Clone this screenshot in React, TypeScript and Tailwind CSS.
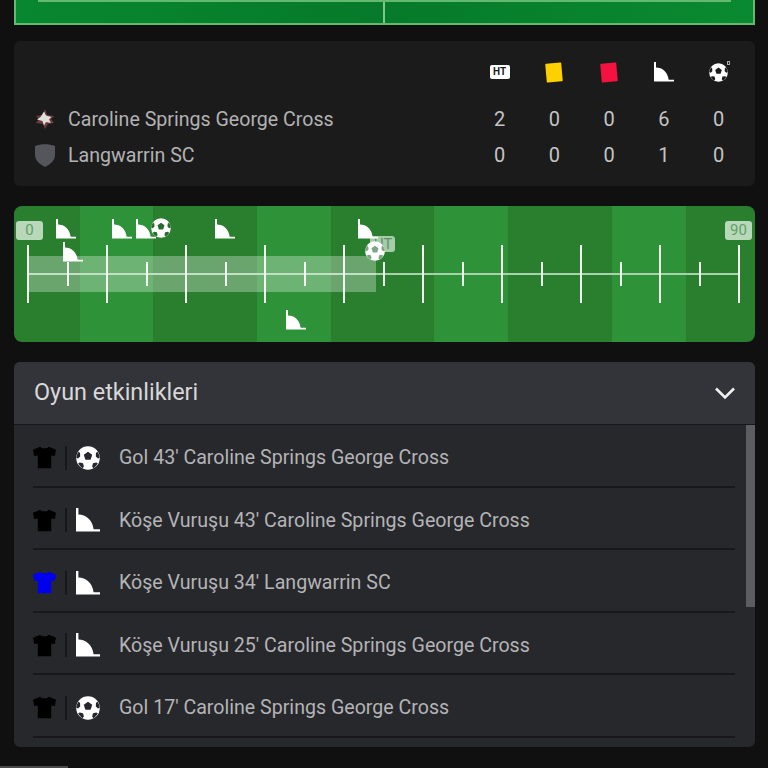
import React from 'react'

const font = { fontFamily: 'Roboto, sans-serif' }

const bands = [
  { w: 'w-[66px]', c: 'bg-[#2a7f2f]' },
  { w: 'w-[73px]', c: 'bg-[#2e9338]' },
  { w: 'w-[104px]', c: 'bg-[#2a7f2f]' },
  { w: 'w-[74px]', c: 'bg-[#2e9338]' },
  { w: 'w-[103px]', c: 'bg-[#2a7f2f]' },
  { w: 'w-[74px]', c: 'bg-[#2e9338]' },
  { w: 'w-[104px]', c: 'bg-[#2a7f2f]' },
  { w: 'w-[74px]', c: 'bg-[#2e9338]' },
  { w: 'flex-1', c: 'bg-[#2a7f2f]' },
]

const ticks = Array.from({ length: 19 }, (_, i) => i)

const events = [
  { shirt: '#000000', icon: 'ball', text: "Gol 43' Caroline Springs George Cross" },
  { shirt: '#000000', icon: 'corner', text: "Köşe Vuruşu 43' Caroline Springs George Cross" },
  { shirt: '#0000f0', icon: 'corner', text: "Köşe Vuruşu 34' Langwarrin SC" },
  { shirt: '#000000', icon: 'corner', text: "Köşe Vuruşu 25' Caroline Springs George Cross" },
  { shirt: '#000000', icon: 'ball', text: "Gol 17' Caroline Springs George Cross" },
]

function Corner({ className }: { className?: string }) {
  return (
    <svg viewBox="0 0 24 24" className={className} fill="#fff">
      <path d="M0 0h2.400v6.500C10 6.500 16.500 12 17.600 21.200H24V23.500H0Z" />
    </svg>
  )
}

function Ball({ className, patch = '#26272c' }: { className?: string; patch?: string }) {
  return (
    <svg viewBox="0 0 24 24" className={className}>
      <circle cx="12" cy="12" r="11.800" fill="#fff" />
      <path d="M12 5.800l4.200 3-1.600 4.900H9.400L7.800 8.800Z" fill={patch} />
      <path d="M21.400 5.500c1.300 1.900 2.100 4 2.300 6.300l-1.700.6-2.200-2 .2-3.400Z" fill={patch} />
      <path d="M2.600 5.500C1.300 7.400.5 9.500.3 11.800l1.700.6 2.200-2-.2-3.400Z" fill={patch} />
      <path d="M21.800 17.600c-1 1.900-2.500 3.500-4.400 4.600l-1.300-1.700.9-3.300 3.300-.6Z" fill={patch} />
      <path d="M2.200 17.600c1 1.900 2.500 3.500 4.400 4.600l1.300-1.700-.9-3.300-3.300-.6Z" fill={patch} />
    </svg>
  )
}

function Shirt({ color }: { color: string }) {
  return (
    <svg viewBox="0 0 24 24" className="w-[23px] h-[23px]" fill={color}>
      <path d="M7.500.8C9 3 15 3 16.500.8L24 3.800 22.800 10.500 19 9.800V23.200H5V9.800L1.200 10.500 0 3.800Z" />
    </svg>
  )
}

function TeamLogo() {
  return (
    <svg viewBox="0 0 22 22" className="w-[22px] h-[22px]">
      <path d="M11 1l2 6 7 1-3 3 3 4-6 1-3 5-2-5-7-1 3-4-3-3 7-1Z" fill="#6e3a3c" />
      <path d="M10 3.500l2 4 5.500 1.500-2.500 2.500 2 3.500-5-1-2 3.500-1.500-4.500-5.500-1.500 3.500-2.500Z" fill="#dededa" />
    </svg>
  )
}

function Shield() {
  return (
    <svg viewBox="0 0 20 24" className="w-[20px] h-[24px]" fill="#55565b">
      <path d="M0 3C6 .5 14 .5 20 3V12C20 17 16 21 10 24 4 21 0 17 0 12Z" />
    </svg>
  )
}

function Stat({ v }: { v: number }) {
  return <div className="w-[54.75px] text-center text-[20px] text-[#c4c4c4]">{v}</div>
}

export default function App() {
  return (
    <div style={font} className="h-[768px] overflow-hidden bg-[#101010] px-[14px]">
      {/* pitch */}
      <div className="w-[741px] h-[25px] flex flex-col bg-[linear-gradient(90deg,#08872f,#067a2a_50%,#0a8a30)] border-x-2 border-b-2 border-[#62b96f]">
        <div className="mx-[22px] h-[2px] bg-[#62b96f]" />
        <div className="flex flex-1">
          <div className="w-[369px] border-r-2 border-[#7cc788]" />
        </div>
      </div>

      {/* stats */}
      <div className="w-[741px] h-[145px] mt-[16px] rounded-[6px] bg-[#1b1b1c] pl-[20px] pr-[9px]">
        <div className="flex h-[60px] pt-[20px] justify-end items-start">
          <div className="w-[54.75px] h-[22px] flex items-center justify-center">
            <span className="w-[20px] h-[14px] rounded-[2px] bg-white text-[#1b1b1d] text-[10px] leading-[14px] font-bold text-center">HT</span>
          </div>
          <div className="w-[54.75px] h-[22px] flex items-center justify-center">
            <div className="w-[16px] h-[19px] rounded-[1px] bg-[#ffd000] -rotate-5" />
          </div>
          <div className="w-[54.75px] h-[22px] flex items-center justify-center">
            <div className="w-[16px] h-[19px] rounded-[1px] bg-[#f5123f] -rotate-5" />
          </div>
          <div className="w-[54.75px] h-[22px] flex items-center justify-center">
            <Corner className="w-[20px] h-[20px]" />
          </div>
          <div className="w-[54.75px] h-[22px] flex items-center justify-center relative">
            <Ball className="w-[19px] h-[19px]" patch="#1b1b1c" />
            <span className="absolute left-[36px] top-[0px] w-[3px] h-[4px] border border-[#aaaaaa]" />
          </div>
        </div>
        <div className="flex items-center h-[36px]">
          <div className="w-[22px] flex justify-center"><TeamLogo /></div>
          <div className="ml-[12px] pt-[1px] flex-1 text-[19.600px] text-[#b2b2b2]">Caroline Springs George Cross</div>
          {[2, 0, 0, 6, 0].map((v, i) => <Stat key={i} v={v} />)}
        </div>
        <div className="flex items-center h-[36px]">
          <div className="w-[22px] flex justify-center"><Shield /></div>
          <div className="ml-[12px] pt-[1px] flex-1 text-[19.600px] text-[#b2b2b2]">Langwarrin SC</div>
          {[0, 0, 0, 1, 0].map((v, i) => <Stat key={i} v={v} />)}
        </div>
      </div>

      {/* timeline */}
      <div className="relative w-[741px] h-[136px] mt-[20px] rounded-[8px] overflow-hidden flex">
        {bands.map((b, i) => <div key={i} className={`${b.w} ${b.c}`} />)}

        <div className="absolute left-[13px] top-[39px] w-[713px] h-[58px] flex justify-between items-center">
          <div className="absolute left-0 right-0 top-[28px] h-[2px] bg-[#a9d2ab]" />
          {ticks.map(i => (
            <div key={i} className={i % 2 === 0 ? 'relative w-[2px] h-[58px] bg-[#f2f7ee]' : 'relative w-[2px] h-[24px] bg-[#f2f7ee]'} />
          ))}
        </div>
        <div className="absolute left-[14px] top-[50px] w-[348px] h-[36px] bg-white/30" />

        <div className="absolute left-[2px] top-[15px] w-[27px] h-[19px] rounded-[3px] bg-[#b9d8ba] text-[#5f9f66] text-[15px] leading-[19px] text-center">0</div>
        <div className="absolute left-[711px] top-[15px] w-[27px] h-[19px] rounded-[3px] bg-[#b9d8ba] text-[#5f9f66] text-[15px] leading-[19px] text-center">90</div>
        <div className="absolute left-[356px] top-[30px] w-[25px] h-[16px] rounded-[3px] bg-[#a6cca8] text-[#5f8f66] text-[14px] leading-[16px] text-right pr-[3px]">HT</div>

        <Corner className="absolute left-[42px] top-[13px] w-[20px] h-[20px]" />
        <Corner className="absolute left-[98px] top-[13px] w-[20px] h-[20px]" />
        <Corner className="absolute left-[122px] top-[13px] w-[20px] h-[20px]" />
        <Corner className="absolute left-[201px] top-[13px] w-[20px] h-[20px]" />
        <Corner className="absolute left-[344px] top-[13px] w-[20px] h-[20px]" />
        <Corner className="absolute left-[49px] top-[36px] w-[20px] h-[20px]" />
        <Corner className="absolute left-[272px] top-[104px] w-[20px] h-[20px]" />
        <Ball className="absolute left-[137px] top-[12px] w-[20px] h-[20px]" patch="#2a6a30" />
        <Ball className="absolute left-[351px] top-[35px] w-[20px] h-[20px]" patch="#7fa584" />
      </div>

      {/* events */}
      <div className="w-[741px] h-[385px] mt-[20px] rounded-[6px] overflow-hidden bg-[#27282c] flex flex-col">
        <div className="h-[63px] shrink-0 flex items-center justify-between pl-[20px] pr-[18px] bg-[#333439] border-b border-[#17181b]">
          <span className="text-[23.400px] text-[#d8d8d8]">Oyun etkinlikleri</span>
          <svg viewBox="0 0 24 24" className="w-[24px] h-[24px]" fill="none" stroke="#f0f0f0" strokeWidth="2.600">
            <path d="M3 7.500l9 9 9-9" />
          </svg>
        </div>
        <div className="relative flex-1 pl-[19px] pr-[20px]">
          {events.map((e, i) => (
            <div key={i} className="h-[62.500px] pt-[5px] flex items-center border-b-2 border-[#17181c]">
              <Shirt color={e.shirt} />
              <div className="w-[2px] h-[24px] ml-[9px] bg-[#17181c]" />
              <div className="ml-[9px] w-[24px] h-[24px]">
                {e.icon === 'ball' ? <Ball className="w-[24px] h-[24px]" /> : <Corner className="w-[24px] h-[24px]" />}
              </div>
              <span className="ml-[19px] text-[19.600px] text-[#b4b4b6]">{e.text}</span>
            </div>
          ))}
          <div className="absolute right-0 top-0 w-[9px] h-[182px] bg-[#5c5d61]" />
        </div>
      </div>

      <div className="w-[68px] h-[2px] mt-[19px] -ml-[14px] bg-[#4a4a4a]" />
    </div>
  )
}
